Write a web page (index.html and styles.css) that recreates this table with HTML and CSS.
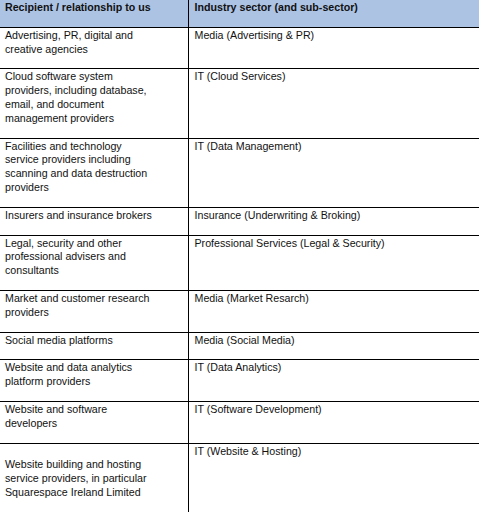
FILE: index.html
```html
<!DOCTYPE html>
<html lang="en">
<head>
<meta charset="utf-8">
<title>Recipients</title>
<link rel="stylesheet" href="styles.css">
</head>
<body>
<table class="rec-table">
  <colgroup>
    <col class="col-a">
    <col class="col-b">
  </colgroup>
  <thead>
    <tr>
      <th>Recipient / relationship to us</th>
      <th>Industry sector (and sub-sector)</th>
    </tr>
  </thead>
  <tbody>
    <tr>
      <td>Advertising, PR, digital and creative agencies</td>
      <td>Media (Advertising &amp; PR)</td>
    </tr>
    <tr>
      <td>Cloud software system providers, including database, email, and document management providers</td>
      <td>IT (Cloud Services)</td>
    </tr>
    <tr>
      <td>Facilities and technology service providers including scanning and data destruction providers</td>
      <td>IT (Data Management)</td>
    </tr>
    <tr>
      <td>Insurers and insurance brokers</td>
      <td>Insurance (Underwriting &amp; Broking)</td>
    </tr>
    <tr>
      <td>Legal, security and other professional advisers and consultants</td>
      <td>Professional Services (Legal &amp; Security)</td>
    </tr>
    <tr>
      <td>Market and customer research providers</td>
      <td>Media (Market Resarch)</td>
    </tr>
    <tr>
      <td>Social media platforms</td>
      <td>Media (Social Media)</td>
    </tr>
    <tr>
      <td>Website and data analytics platform providers</td>
      <td>IT (Data Analytics)</td>
    </tr>
    <tr>
      <td>Website and software developers</td>
      <td>IT (Software Development)</td>
    </tr>
    <tr>
      <td class="lead-blank">Website building and hosting service providers, in particular Squarespace Ireland Limited</td>
      <td>IT (Website &amp; Hosting)</td>
    </tr>
  </tbody>
</table>
</body>
</html>
```
FILE: styles.css
```css
html, body {
  margin: 0;
  padding: 0;
  background: #ffffff;
}

.rec-table {
  border-collapse: collapse;
  table-layout: fixed;
  width: 480px;
  font-family: "Liberation Sans", Arial, sans-serif;
  font-size: 10.67px;
  line-height: 13.8px;
  color: #111111;
}

.col-a { width: 188px; }
.col-b { width: 292px; }

.rec-table th,
.rec-table td {
  text-align: left;
  vertical-align: top;
  padding: 1px 6px 12px 6px;
  border-top: 1px solid #000000;
  border-bottom: 1px solid #000000;
}

.rec-table th:first-child,
.rec-table td:first-child {
  padding-left: 5px;
  padding-right: 34px;
  border-right: 1px solid #000000;
}

.rec-table thead th {
  background: #acc3e4;
  font-weight: bold;
  border-top: none;
}

.rec-table td.lead-blank {
  padding-top: 14.8px;
}
```
